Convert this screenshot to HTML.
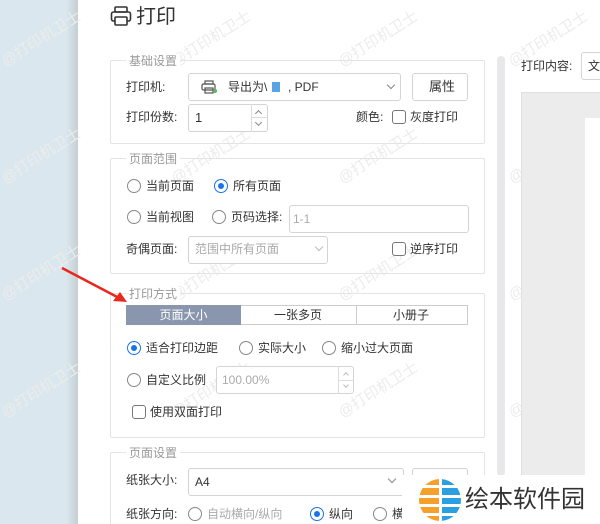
<!DOCTYPE html><html style="width:600px;height:524px;overflow:hidden"><head><meta charset="utf-8"><style>
*{box-sizing:border-box;margin:0;padding:0}
body{width:600px;height:524px;overflow:hidden;position:relative;background:#fff;font-family:"Liberation Sans","Noto Sans CJK SC",sans-serif;font-size:12px;color:#333}
.a{position:absolute;white-space:nowrap}
.left{left:0;top:0;width:78px;height:524px;background:linear-gradient(to right,#dae7ee 0,#dae7ee 66px,#c4cfd4 78px)}
.grp{position:absolute;border:1px solid #e4e4e7;border-radius:2px}
.leg{position:absolute;background:#fff;color:#999;padding:0 3px;font-size:12px;line-height:14px}
.box{position:absolute;border:1px solid #d4d4d8;border-radius:3px;background:#fff}
.rad{position:absolute;width:14px;height:14px;border:1px solid #888;border-radius:50%;background:#fff}
.rad.on{border-color:#1a73e8}
.rad.on:after{content:"";position:absolute;left:3px;top:3px;width:6px;height:6px;border-radius:50%;background:#1a73e8}
.chk{position:absolute;width:14px;height:14px;border:1px solid #777;border-radius:3px;background:#fff}
.t{position:absolute;line-height:14px;white-space:nowrap}
.g{color:#aaa}
.wm{position:absolute;color:#ececec;font-size:15px;transform:rotate(-32deg);transform-origin:left bottom;white-space:nowrap}
.chev{position:absolute;width:6px;height:6px;border-right:1px solid #888;border-bottom:1px solid #888;transform:rotate(45deg)}
</style></head><body>
<div class="a left"></div>
<div class="wm" style="left:8px;top:50px">@打印机卫士</div>
<div class="wm" style="left:178px;top:50px">@打印机卫士</div>
<div class="wm" style="left:345px;top:50px">@打印机卫士</div>
<div class="wm" style="left:515px;top:50px">@打印机卫士</div>
<div class="wm" style="left:8px;top:167px">@打印机卫士</div>
<div class="wm" style="left:178px;top:167px">@打印机卫士</div>
<div class="wm" style="left:345px;top:167px">@打印机卫士</div>
<div class="wm" style="left:515px;top:167px">@打印机卫士</div>
<div class="wm" style="left:8px;top:284px">@打印机卫士</div>
<div class="wm" style="left:178px;top:284px">@打印机卫士</div>
<div class="wm" style="left:345px;top:284px">@打印机卫士</div>
<div class="wm" style="left:515px;top:284px">@打印机卫士</div>
<div class="wm" style="left:8px;top:401px">@打印机卫士</div>
<div class="wm" style="left:178px;top:401px">@打印机卫士</div>
<div class="wm" style="left:345px;top:401px">@打印机卫士</div>
<div class="wm" style="left:515px;top:401px">@打印机卫士</div>

<svg class="a" style="left:110px;top:5px" width="22" height="22" viewBox="0 0 22 22" fill="none" stroke="#333" stroke-width="1.6"><rect x="5" y="2" width="12" height="5" rx="1"/><rect x="1.5" y="7" width="19" height="9" rx="2"/><rect x="5" y="12" width="12" height="8" rx="1" fill="#fff"/></svg>
<div class="t" style="left:136px;top:5px;font-size:20px;line-height:24px;color:#333">打印</div>

<div class="grp" style="left:110px;top:60px;width:375px;height:84px"></div>
<div class="leg" style="left:126px;top:54px">基础设置</div>
<div class="t" style="left:126px;top:80px">打印机:</div>
<div class="box" style="left:188px;top:73px;width:213px;height:28px"></div>
<svg class="a" style="left:201px;top:80px" width="16" height="14" viewBox="0 0 16 14" fill="none" stroke="#555" stroke-width="1.2"><rect x="4" y="1" width="8" height="3"/><rect x="1" y="4" width="13" height="6" rx="1.5"/><rect x="4" y="8" width="8" height="5"/><circle cx="14" cy="11" r="2" fill="#5cb85c" stroke="none"/></svg>
<div class="t" style="left:228px;top:80px">导出为\</div>
<div class="a" style="left:272px;top:82px;width:8px;height:10px;background:#5aa4e6"></div>
<div class="t" style="left:288px;top:80px">, PDF</div>
<div class="chev" style="left:388px;top:82px"></div>
<div class="box" style="left:412px;top:73px;width:56px;height:28px"></div>
<div class="t" style="left:429px;top:80px;font-size:13px">属性</div>
<div class="t" style="left:126px;top:110px">打印份数:</div>
<div class="box" style="left:188px;top:104px;width:80px;height:28px"></div>
<div class="a" style="left:251px;top:104px;width:1px;height:28px;background:#ddd"></div>
<div class="a" style="left:251px;top:117px;width:17px;height:1px;background:#ddd"></div>
<div class="t" style="left:195px;top:111px;font-size:13px">1</div>
<div class="chev" style="left:256px;top:111px;transform:rotate(225deg);width:5px;height:5px"></div>
<div class="chev" style="left:256px;top:120px;width:5px;height:5px"></div>
<div class="t" style="left:356px;top:110px">颜色:</div>
<div class="chk" style="left:392px;top:110px"></div>
<div class="t" style="left:410px;top:110px">灰度打印</div>

<div class="grp" style="left:110px;top:158px;width:375px;height:116px"></div>
<div class="leg" style="left:126px;top:152px">页面范围</div>
<div class="rad" style="left:127px;top:179px"></div><div class="t" style="left:146px;top:179px">当前页面</div>
<div class="rad on" style="left:214px;top:179px"></div><div class="t" style="left:233px;top:179px">所有页面</div>
<div class="rad" style="left:127px;top:210px"></div><div class="t" style="left:146px;top:210px">当前视图</div>
<div class="rad" style="left:212px;top:210px"></div><div class="t" style="left:231px;top:210px">页码选择:</div>
<div class="box" style="left:289px;top:205px;width:180px;height:28px"></div>
<div class="t g" style="left:293px;top:212px">1-1</div>
<div class="t" style="left:126px;top:242px">奇偶页面:</div>
<div class="box" style="left:188px;top:236px;width:140px;height:28px"></div>
<div class="t g" style="left:195px;top:242px">范围中所有页面</div>
<div class="chev" style="left:316px;top:244px;border-color:#bbb"></div>
<div class="chk" style="left:392px;top:242px"></div>
<div class="t" style="left:410px;top:242px">逆序打印</div>

<div class="grp" style="left:110px;top:293px;width:375px;height:145px"></div>
<div class="leg" style="left:126px;top:287px">打印方式</div>
<div class="a" style="left:126px;top:305px;width:342px;height:20px;border:1px solid #ccc;background:#fff"></div>
<div class="a" style="left:126px;top:305px;width:115px;height:20px;background:#8a96ae;color:#fff;text-align:center;line-height:20px">页面大小</div>
<div class="a" style="left:356px;top:305px;width:1px;height:20px;background:#ccc"></div>
<div class="t" style="left:274px;top:308px">一张多页</div>
<div class="t" style="left:393px;top:308px">小册子</div>
<div class="rad on" style="left:127px;top:341px"></div><div class="t" style="left:146px;top:341px">适合打印边距</div>
<div class="rad" style="left:239px;top:341px"></div><div class="t" style="left:258px;top:341px">实际大小</div>
<div class="rad" style="left:322px;top:341px"></div><div class="t" style="left:341px;top:341px">缩小过大页面</div>
<div class="rad" style="left:127px;top:373px"></div><div class="t" style="left:146px;top:373px">自定义比例</div>
<div class="box" style="left:216px;top:366px;width:138px;height:28px"></div>
<div class="a" style="left:338px;top:366px;width:1px;height:28px;background:#ddd"></div>
<div class="a" style="left:338px;top:380px;width:16px;height:1px;background:#ddd"></div>
<div class="t g" style="left:222px;top:373px">100.00%</div>
<div class="chev" style="left:344px;top:373px;transform:rotate(225deg);width:4px;height:4px;border-color:#bbb"></div>
<div class="chev" style="left:344px;top:383px;width:4px;height:4px;border-color:#bbb"></div>
<div class="chk" style="left:132px;top:405px"></div>
<div class="t" style="left:150px;top:405px">使用双面打印</div>

<div class="grp" style="left:110px;top:452px;width:375px;height:80px"></div>
<div class="leg" style="left:126px;top:446px">页面设置</div>
<div class="t" style="left:126px;top:473px">纸张大小:</div>
<div class="box" style="left:188px;top:468px;width:216px;height:28px"></div>
<div class="t" style="left:195px;top:475px">A4</div>
<div class="chev" style="left:389px;top:476px"></div>
<div class="box" style="left:412px;top:468px;width:56px;height:28px"></div>
<div class="t" style="left:126px;top:507px">纸张方向:</div>
<div class="rad" style="left:188px;top:507px"></div><div class="t g" style="left:207px;top:507px">自动横向/纵向</div>
<div class="rad on" style="left:310px;top:507px"></div><div class="t" style="left:329px;top:507px">纵向</div>
<div class="rad" style="left:373px;top:507px"></div><div class="t" style="left:392px;top:507px">横</div>

<div class="a" style="left:497px;top:56px;width:8px;height:420px;background:#e8e8ea;border-radius:4px"></div>
<div class="t" style="left:521px;top:59px">打印内容:</div>
<div class="box" style="left:581px;top:52px;width:30px;height:28px"></div>
<div class="t" style="left:588px;top:59px">文</div>
<div class="a" style="left:521px;top:92px;width:90px;height:432px;background:#ececec;border:1px solid #e0e0e0"></div>
<div class="a" style="left:585px;top:118px;width:20px;height:406px;background:#fff"></div>

<div class="a" style="left:402px;top:475px;width:198px;height:49px;background:#fff"></div>
<svg class="a" style="left:418px;top:478px" width="46" height="44" viewBox="0 0 46 44">
<defs><clipPath id="c"><circle cx="22" cy="22" r="21"/></clipPath></defs>
<g clip-path="url(#c)">
<rect x="0" y="0" width="21" height="7" fill="#f5a02a"/><rect x="24" y="0" width="22" height="7" fill="#2aa0e0"/>
<rect x="0" y="10" width="21" height="7" fill="#f5a02a"/><rect x="24" y="10" width="22" height="7" fill="#2aa0e0"/>
<rect x="0" y="20" width="21" height="6" fill="#f5a02a"/><rect x="24" y="20" width="22" height="6" fill="#2aa0e0"/>
<rect x="0" y="29" width="21" height="6" fill="#f5a02a"/><rect x="24" y="29" width="22" height="6" fill="#2aa0e0"/>
<rect x="0" y="38" width="21" height="6" fill="#f5a02a"/><rect x="24" y="38" width="22" height="6" fill="#2aa0e0"/>
</g></svg>
<div class="t" style="left:465px;top:487px;font-size:24px;line-height:26px;color:#333">绘本软件园</div>

<svg class="a" style="left:55px;top:262px" width="80" height="45" viewBox="0 0 80 45"><line x1="7" y1="6" x2="66" y2="37" stroke="#e8281e" stroke-width="2.5"/><polygon points="72,40 58,39 65,30" fill="#e8281e"/></svg>
</body></html>
